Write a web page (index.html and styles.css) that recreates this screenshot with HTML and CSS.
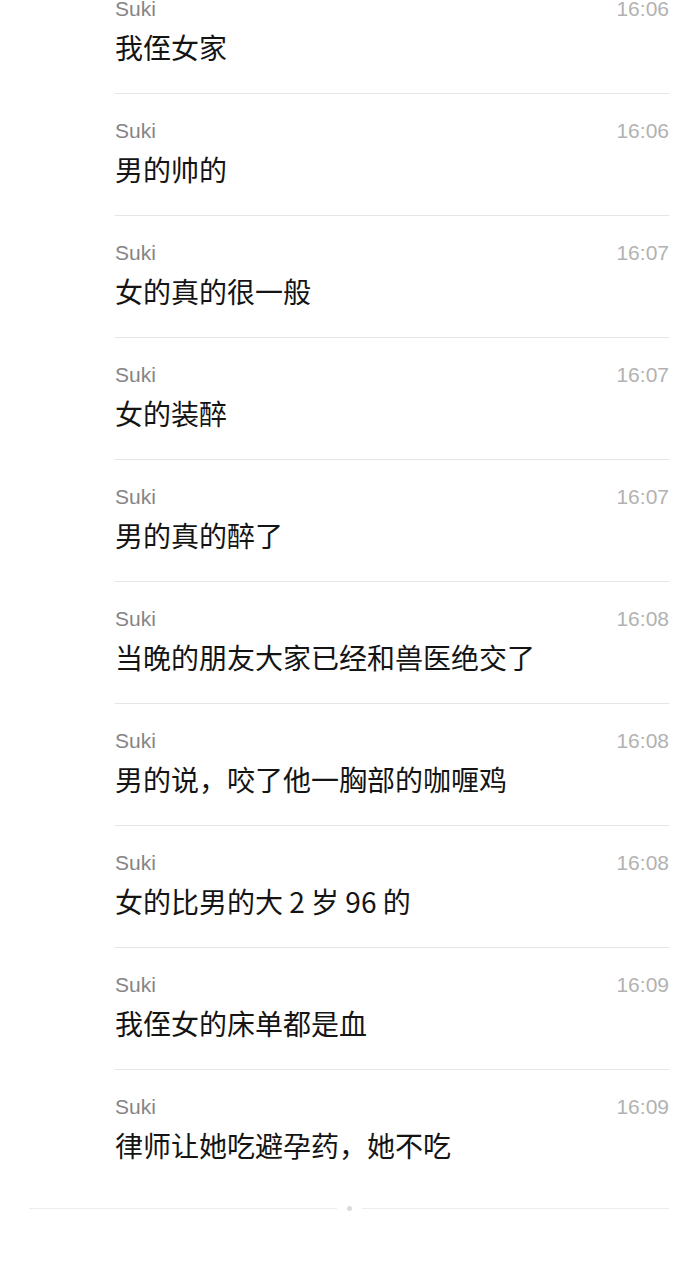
FILE: index.html
```html
<!DOCTYPE html>
<html lang="zh-CN">
<head>
<meta charset="utf-8">
<link rel="stylesheet" href="styles.css">
</head>
<body>
<div class="list">
  <div class="row"><div class="meta"><span class="name">Suki</span><span class="time">16:06</span></div><div class="msg">我侄女家</div></div>
  <div class="row"><div class="meta"><span class="name">Suki</span><span class="time">16:06</span></div><div class="msg">男的帅的</div></div>
  <div class="row"><div class="meta"><span class="name">Suki</span><span class="time">16:07</span></div><div class="msg">女的真的很一般</div></div>
  <div class="row"><div class="meta"><span class="name">Suki</span><span class="time">16:07</span></div><div class="msg">女的装醉</div></div>
  <div class="row"><div class="meta"><span class="name">Suki</span><span class="time">16:07</span></div><div class="msg">男的真的醉了</div></div>
  <div class="row"><div class="meta"><span class="name">Suki</span><span class="time">16:08</span></div><div class="msg">当晚的朋友大家已经和兽医绝交了</div></div>
  <div class="row"><div class="meta"><span class="name">Suki</span><span class="time">16:08</span></div><div class="msg">男的说，咬了他一胸部的咖喱鸡</div></div>
  <div class="row"><div class="meta"><span class="name">Suki</span><span class="time">16:08</span></div><div class="msg">女的比男的大 2 岁 96 的</div></div>
  <div class="row"><div class="meta"><span class="name">Suki</span><span class="time">16:09</span></div><div class="msg">我侄女的床单都是血</div></div>
  <div class="row"><div class="meta"><span class="name">Suki</span><span class="time">16:09</span></div><div class="msg">律师让她吃避孕药，她不吃</div></div>
</div>
<div class="footer">
  <span class="rule"></span>
  <span class="dot"></span>
  <span class="rule"></span>
</div>
</body>
</html>
```
FILE: styles.css
```css
html, body {
  margin: 0;
  padding: 0;
  background: #ffffff;
}
body {
  width: 685px;
  height: 1280px;
  overflow: hidden;
  font-family: "Liberation Sans", "Noto Sans CJK SC", sans-serif;
}
.list {
  margin-top: -28px;
  padding-left: 115px;
  padding-right: 16px;
}
.row {
  display: flex;
  flex-direction: column;
  padding-top: 24px;
  box-sizing: border-box;
  height: 122px;
  border-bottom: 1px solid #e6e6e6;
}
.row:last-child {
  border-bottom: none;
}
.meta {
  display: flex;
  justify-content: space-between;
  align-items: center;
  height: 26px;
  line-height: 26px;
  font-size: 21px;
}
.name {
  color: #858585;
}
.time {
  color: #b2b2b2;
}
.msg {
  margin-top: 7px;
  height: 36px;
  line-height: 36px;
  font-size: 28px;
  color: #141414;
  font-family: "Noto Sans CJK SC", "Liberation Sans", sans-serif;
}
.footer {
  display: flex;
  align-items: center;
  margin-top: 14px;
  padding-left: 29px;
  padding-right: 16px;
  gap: 10px;
}
.rule {
  flex: 1;
  height: 1px;
  background: #ececec;
}
.dot {
  width: 5px;
  height: 5px;
  border-radius: 50%;
  background: #dcdcdc;
}
```
